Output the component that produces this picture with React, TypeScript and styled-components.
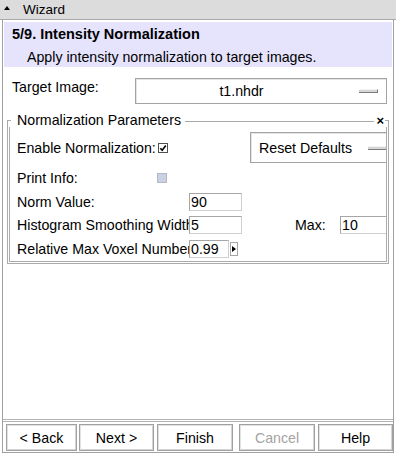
import React from 'react';
import styled, { createGlobalStyle } from 'styled-components';

const GlobalStyle = createGlobalStyle`
  html, body {
    margin: 0;
    padding: 0;
    background: #fff;
  }
  body {
    font-family: "Liberation Sans", Arial, sans-serif;
    font-size: 14.2px;
    color: #000;
  }
`;

const Window = styled.div`
  width: 399px;
  height: 453px;
  display: flex;
  flex-direction: column;
  box-sizing: border-box;
  background: #fff;
  overflow: hidden;
`;

const TitleBar = styled.div`
  height: 19px;
  margin-right: 3px;
  border-bottom: 1px solid #a9a9a9;
  background: #dcdcdc;
  display: flex;
  align-items: center;
  padding-left: 4px;
  gap: 13px;
  line-height: 19px;
  font-size: 13.5px;
`;

const Caret = styled.span`
  width: 0;
  height: 0;
  border-left: 3px solid transparent;
  border-right: 3px solid transparent;
  border-bottom: 4px solid #000;
  margin-bottom: 3px;
`;

const Panel = styled.div`
  flex: 1;
  margin-left: 2px;
  width: 392px;
  box-sizing: border-box;
  border: 1px solid #a0a0a0;
  border-top: none;
  padding: 2px 1px 0 1px;
  display: flex;
  flex-direction: column;
`;

const Header = styled.div`
  background: #e6e4fd;
  height: 45px;
  box-sizing: border-box;
  padding: 4px 0 2px 8px;
`;

const StepTitle = styled.div`
  font-weight: bold;
  font-size: 14.5px;
  line-height: 16px;
`;

const StepText = styled.div`
  margin-top: 7px;
  padding-left: 15px;
  line-height: 16px;
`;

const TargetRow = styled.div`
  display: flex;
  align-items: flex-start;
  margin-top: 11px;
  padding: 0 5px 0 8px;
`;

const TargetLabel = styled.div`
  width: 123px;
  line-height: 16px;
  padding-top: 1px;
`;

const DropDown = styled.div<{ $width: number }>`
  width: ${(p) => p.$width}px;
  height: 26px;
  box-sizing: border-box;
  border: 1px solid #a3a3a3;
  box-shadow: inset 1px 1px 0 #e4e4e4;
  display: flex;
  align-items: center;
  flex-shrink: 0;
`;

const DropText = styled.span<{ $center?: boolean }>`
  flex: 1;
  text-align: ${(p) => (p.$center ? 'center' : 'left')};
  padding: ${(p) => (p.$center ? '0 12px 0 0' : '0 0 0 8px')};
`;

const Indicator = styled.span`
  width: 19px;
  height: 4px;
  box-sizing: border-box;
  background: #d6d6d6;
  border-top: 1px solid #f2f2f2;
  border-bottom: 1px solid #7c7c7c;
  border-right: 1px solid #7c7c7c;
  margin-right: 8px;
  flex-shrink: 0;
`;

const Frame = styled.div`
  margin: 10px 3px 0 3px;
  display: flex;
  flex-direction: column;
`;

const FrameTop = styled.div`
  height: 13px;
  display: flex;
  align-items: center;
`;

const Corner = styled.span<{ $right?: boolean }>`
  align-self: flex-end;
  width: 3px;
  height: 6px;
  border-top: 1px solid #a8a8a8;
  ${(p) => (p.$right ? 'border-right' : 'border-left')}: 1px solid #a8a8a8;
  flex-shrink: 0;
`;

const FrameLegend = styled.span`
  padding: 0 4px 0 6px;
  line-height: 13px;
`;

const FrameLine = styled.span`
  flex: 1;
  border-top: 1px solid #a8a8a8;
  margin-top: 1px;
`;

const CloseMark = styled.span`
  font-size: 13px;
  font-weight: bold;
  line-height: 13px;
  padding: 0 1px 0 2px;
`;

const FrameBody = styled.div`
  border: 3px double #ababab;
  border-top: none;
  padding: 5px 0 0 7px;
  overflow: hidden;
`;

const Row = styled.div<{ $h: number }>`
  display: flex;
  align-items: center;
  height: ${(p) => p.$h}px;
  white-space: nowrap;
`;

const Label = styled.span<{ $w: number }>`
  width: ${(p) => p.$w}px;
  overflow: hidden;
  flex-shrink: 0;
`;

const Box = styled.span`
  display: inline-flex;
  width: 10px;
  height: 10px;
  flex-shrink: 0;
`;

const ResetButton = styled.div`
  margin-left: 82px;
  width: 146px;
  height: 31px;
  box-sizing: border-box;
  border: 1px solid #a3a3a3;
  box-shadow: inset 1px 1px 0 #e4e4e4;
  display: flex;
  align-items: center;
  flex-shrink: 0;
`;

const Field = styled.div<{ $w: number }>`
  width: ${(p) => p.$w}px;
  height: 18px;
  box-sizing: border-box;
  border: 1px solid #a6a6a6;
  border-right-color: #d0d0d0;
  border-bottom-color: #d0d0d0;
  padding-left: 1px;
  line-height: 16px;
  flex-shrink: 0;
`;

const MaxLabel = styled.span`
  margin-left: 53px;
  width: 45px;
  flex-shrink: 0;
`;

const SpinArrow = styled.span`
  width: 8px;
  height: 14px;
  margin-left: 1px;
  box-sizing: border-box;
  border: 1px solid #a6a6a6;
  display: flex;
  align-items: center;
  justify-content: center;
  flex-shrink: 0;
`;

const Filler = styled.div`
  flex: 1;
`;

const Footer = styled.div`
  border-top: 3px double #b4b4b4;
  margin: 0 -1px;
  padding: 2px 0 1px 3px;
  display: flex;
`;

const NavButton = styled.div<{ $w: number; $gap: number; $disabled?: boolean }>`
  width: ${(p) => p.$w}px;
  margin-left: ${(p) => p.$gap}px;
  height: 27px;
  box-sizing: border-box;
  border: 1px solid #a0a0a0;
  box-shadow: inset 1px 1px 0 #e2e2e2, inset -1px -1px 0 #d4d4d4;
  display: flex;
  align-items: center;
  justify-content: center;
  color: ${(p) => (p.$disabled ? '#a4a4a4' : '#000')};
`;

const CheckedBox = () => (
  <Box>
    <svg width="10" height="10" viewBox="0 0 10 10">
      <rect x="0.5" y="0.5" width="9" height="9" fill="#fff" stroke="#505050" />
      <path d="M2.3 5.2 L4.2 7.2 L7.8 2.6" fill="none" stroke="#000" strokeWidth="1.6" />
    </svg>
  </Box>
);

const DisabledBox = () => (
  <Box>
    <svg width="10" height="10" viewBox="0 0 10 10">
      <rect x="0.5" y="0.5" width="9" height="9" fill="#c9d2e4" stroke="#b4b8c0" />
    </svg>
  </Box>
);

const buttons = [
  { text: '< Back', w: 71, gap: 0 },
  { text: 'Next >', w: 75, gap: 2 },
  { text: 'Finish', w: 76, gap: 3 },
  { text: 'Cancel', w: 76, gap: 6, disabled: true },
  { text: 'Help', w: 75, gap: 3 },
];

export default function App() {
  return (
    <>
      <GlobalStyle />
      <Window>
        <TitleBar>
          <Caret />
          <span>Wizard</span>
        </TitleBar>
        <Panel>
          <Header>
            <StepTitle>5/9. Intensity Normalization</StepTitle>
            <StepText>Apply intensity normalization to target images.</StepText>
          </Header>

          <TargetRow>
            <TargetLabel>Target Image:</TargetLabel>
            <DropDown $width={252}>
              <DropText $center>t1.nhdr</DropText>
              <Indicator />
            </DropDown>
          </TargetRow>

          <Frame>
            <FrameTop>
              <Corner />
              <FrameLegend>Normalization Parameters</FrameLegend>
              <FrameLine />
              <CloseMark>×</CloseMark>
              <Corner $right />
            </FrameTop>
            <FrameBody>
              <Row $h={31}>
                <Label $w={141}>Enable Normalization:</Label>
                <CheckedBox />
                <ResetButton>
                  <DropText>Reset Defaults</DropText>
                  <Indicator />
                </ResetButton>
              </Row>
              <Row $h={29}>
                <Label $w={140}>Print Info:</Label>
                <DisabledBox />
              </Row>
              <Row $h={20}>
                <Label $w={172}>Norm Value:</Label>
                <Field $w={53}>90</Field>
              </Row>
              <Row $h={25}>
                <Label $w={172}>Histogram Smoothing Width</Label>
                <Field $w={53}>5</Field>
                <MaxLabel>Max:</MaxLabel>
                <Field $w={50}>10</Field>
              </Row>
              <Row $h={24}>
                <Label $w={172}>Relative Max Voxel Number</Label>
                <Field $w={40}>0.99</Field>
                <SpinArrow>
                  <svg width="4" height="6" viewBox="0 0 4 6">
                    <path d="M0 0 L4 3 L0 6 Z" fill="#000" />
                  </svg>
                </SpinArrow>
              </Row>
            </FrameBody>
          </Frame>

          <Filler />

          <Footer>
            {buttons.map((b) => (
              <NavButton key={b.text} $w={b.w} $gap={b.gap} $disabled={b.disabled}>
                {b.text}
              </NavButton>
            ))}
          </Footer>
        </Panel>
      </Window>
    </>
  );
}
